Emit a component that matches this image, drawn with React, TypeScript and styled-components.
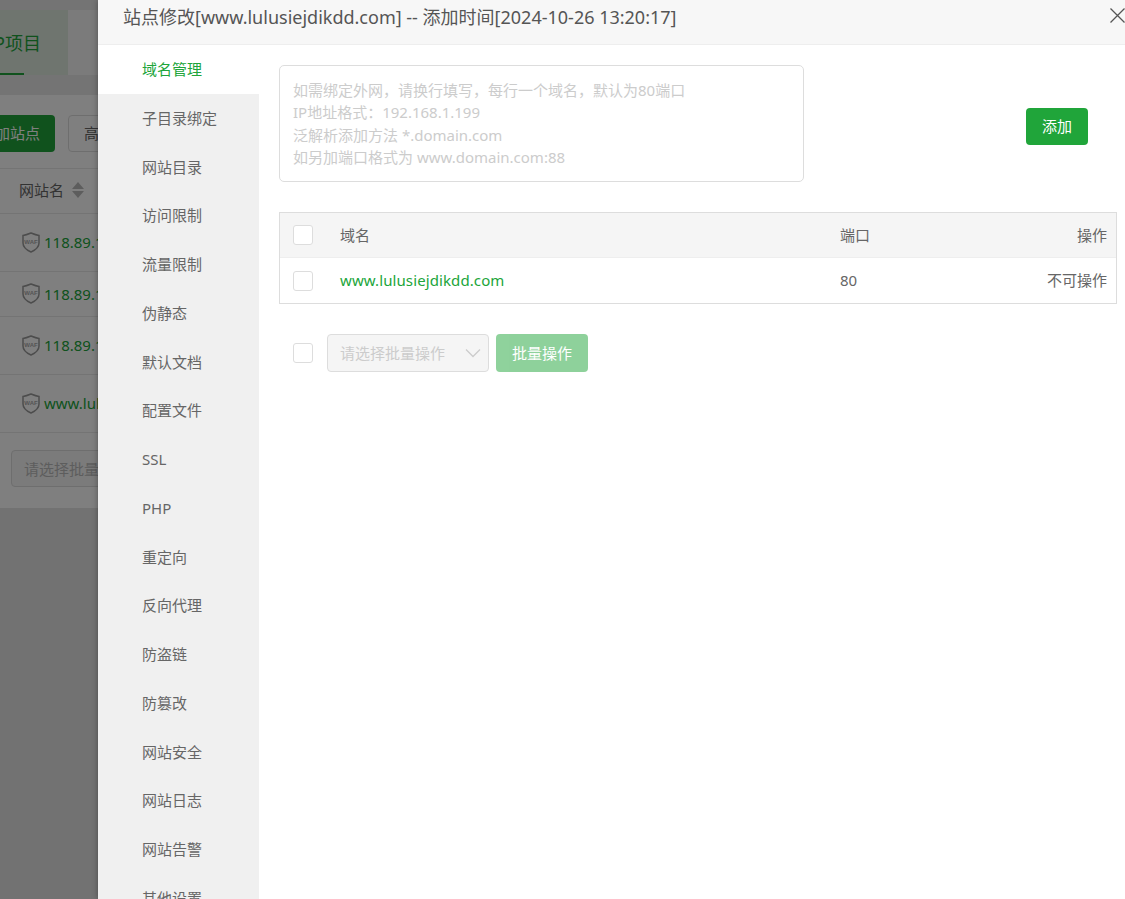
import styled, { createGlobalStyle } from "styled-components";

const FONT = `"Noto Sans", "Noto Sans CJK SC", sans-serif`;
const GREEN = "#20a53a";

const GlobalStyle = createGlobalStyle`
    html, body {
        margin: 0;
        padding: 0;
        overflow: hidden;
    }
    * {
        box-sizing: border-box;
    }
    body {
        font-family: ${FONT};
        font-size: 15px;
        color: #666;
    }
`;

const Page = styled.div`
    position: relative;
    width: 1125px;
    height: 899px;
    overflow: hidden;
    background: #e4e4e4;
`;

const TopTabs = styled.div`
    display: flex;
    height: 95px;
    padding-top: 10px;
    background: #e8e8e8;
`;

const ActiveTab = styled.div`
    width: 68px;
    height: 65px;
    background: #deeade;
    display: flex;
    align-items: center;
    justify-content: flex-end;
    padding: 0 27px 2px 0;
    font-size: 18px;
    color: ${GREEN};
    position: relative;
    white-space: nowrap;

    &::after {
        content: "";
        position: absolute;
        left: 0;
        bottom: 0;
        width: 24px;
        height: 2px;
        background: ${GREEN};
    }
`;

const OtherTab = styled.div`
    width: 300px;
    height: 65px;
    background: #f6f6f6;
`;

const Panel = styled.div`
    background: #fff;
    height: 413px;
`;

const Toolbar = styled.div`
    display: flex;
    gap: 13px;
    height: 74px;
    padding-top: 20px;
    border-bottom: 1px solid #e8e8e8;
`;

const AddSite = styled.div`
    width: 55px;
    height: 37px;
    background: ${GREEN};
    border-radius: 0 4px 4px 0;
    color: #fff;
    display: flex;
    align-items: center;
    justify-content: flex-end;
    padding: 0 15px 2px 0;
    white-space: nowrap;
`;

const Advanced = styled.div`
    width: 120px;
    height: 37px;
    border: 1px solid #ddd;
    border-radius: 4px;
    display: flex;
    align-items: center;
    padding: 0 0 2px 15px;
`;

const SiteRow = styled.div<{ $h: number }>`
    display: flex;
    align-items: center;
    gap: 4px;
    height: ${(p) => p.$h}px;
    padding: 0 0 1px 22px;
    border-bottom: 1px solid #e8e8e8;
    color: ${GREEN};
    font-size: 15px;
    white-space: nowrap;
`;

const HeadRow = styled.div`
    display: flex;
    align-items: center;
    gap: 8px;
    height: 45px;
    padding: 0 0 3px 19px;
    border-bottom: 1px solid #e8e8e8;
    color: #666;
`;

const Sort = styled.span`
    display: flex;
    flex-direction: column;
    gap: 2px;

    &::before, &::after {
        content: "";
        border-left: 6.5px solid transparent;
        border-right: 6.5px solid transparent;
    }
    &::before {
        border-bottom: 7px solid #bbb;
    }
    &::after {
        border-top: 7px solid #bbb;
    }
`;

const PageBulk = styled.div`
    padding: 17px 0 0 11px;
`;

const PageSelect = styled.div`
    width: 200px;
    height: 37px;
    border: 1px solid #ddd;
    border-radius: 4px;
    background: #f6f6f6;
    color: #bbb;
    display: flex;
    align-items: center;
    padding: 0 0 1px 12px;
`;

const Shade = styled.div`
    position: absolute;
    inset: 0;
    background: rgba(0, 0, 0, 0.5);
`;

const Drawer = styled.div`
    position: absolute;
    top: 0;
    left: 98px;
    bottom: 0;
    width: 1039px;
    background: #fff;
    box-shadow: 0 0 6px rgba(0, 0, 0, 0.35);
    display: flex;
    flex-direction: column;
`;

const DrawerHeader = styled.div`
    flex: none;
    height: 45px;
    display: flex;
    justify-content: space-between;
    align-items: flex-start;
    padding: 0 12px 0 25px;
    background: #f7f7f7;
    border-bottom: 1px solid #eee;
`;

const Title = styled.div`
    font-size: 18px;
    line-height: 34px;
    color: #555;
    white-space: nowrap;
`;

const Close = styled.svg`
    width: 15px;
    height: 15px;
    margin-top: 8px;
    stroke: #555;
    stroke-width: 1.3;
    fill: none;
`;

const DrawerBody = styled.div`
    flex: 1;
    min-height: 0;
    display: flex;
`;

const SideNav = styled.ul`
    flex: none;
    width: 161px;
    margin: 0;
    padding: 0;
    list-style: none;
    background: #f0f0f0;
    overflow: hidden;
`;

const NavItem = styled.li<{ $active?: boolean }>`
    height: 48.75px;
    line-height: 48px;
    padding-left: 44px;
    background: ${(p) => (p.$active ? "#fff" : "transparent")};
    color: ${(p) => (p.$active ? GREEN : "#666")};
`;

const Main = styled.div`
    flex: 1;
    padding: 20px 20px 0;
`;

const AddRow = styled.div`
    display: flex;
    align-items: flex-start;
    justify-content: space-between;
    padding-right: 29px;
`;

const DomainInput = styled.div`
    width: 525px;
    height: 117px;
    padding: 13px 13px;
    border: 1px solid #ddd;
    border-radius: 5px;
    line-height: 22.4px;
    color: #ccc;
`;

const GreenButton = styled.button<{ $disabled?: boolean }>`
    height: ${(p) => (p.$disabled ? "38px" : "37px")};
    padding: 0 16px;
    border: none;
    border-radius: 4px;
    background: ${GREEN};
    opacity: ${(p) => (p.$disabled ? 0.5 : 1)};
    color: #fff;
    font-family: inherit;
    font-size: 15px;
    line-height: 1;
`;

const AddButton = styled(GreenButton)`
    margin-top: 43px;
`;

const Table = styled.div`
    margin-top: 30px;
    border: 1px solid #ddd;
`;

const Row = styled.div<{ $head?: boolean }>`
    display: grid;
    grid-template-columns: 47px 500px 1fr auto;
    align-items: center;
    height: 45px;
    padding: 0 9px 0 13px;
    background: ${(p) => (p.$head ? "#f5f5f5" : "#fff")};
    border-bottom: ${(p) => (p.$head ? "1px solid #eee" : "none")};
    color: #666;
`;

const Cell = styled.span<{ $green?: boolean }>`
    margin-bottom: 2px;
    color: ${(p) => (p.$green ? GREEN : "inherit")};
    letter-spacing: ${(p) => (p.$green ? "0.1px" : "0")};
`;

const Check = styled.span`
    display: block;
    width: 20px;
    height: 20px;
    border: 1px solid #ddd;
    border-radius: 3px;
    background: #fff;
`;

const BulkRow = styled.div`
    display: flex;
    align-items: center;
    margin-top: 30px;
    padding-left: 14px;
`;

const BulkSelect = styled.div`
    width: 162px;
    height: 38px;
    margin: 0 7px 0 14px;
    padding: 0 7px 1px 12px;
    display: flex;
    align-items: center;
    justify-content: space-between;
    border: 1px solid #ddd;
    border-radius: 4px;
    background: #f5f5f5;
    color: #ccc;
    white-space: nowrap;
`;

const Chevron = styled.svg`
    width: 16px;
    height: 10px;
    flex: none;
    stroke: #ccc;
    stroke-width: 1.3;
    fill: none;
`;

const navItems = [
    "域名管理", "子目录绑定", "网站目录", "访问限制", "流量限制", "伪静态",
    "默认文档", "配置文件", "SSL", "PHP", "重定向", "反向代理",
    "防盗链", "防篡改", "网站安全", "网站日志", "网站告警", "其他设置",
];

function WafShield() {
    return (
        <svg width="18" height="21" viewBox="0 0 18 21" fill="none">
            <path d="M1 3.5 C4 3 6.5 2 9 1 C11.5 2 14 3 17 3.5 V11 C17 15 13.5 18 9 20 C4.5 18 1 15 1 11 Z" stroke="#9a9a9a" strokeWidth="1.5" />
            <text x="9" y="12" textAnchor="middle" fontSize="6" fontWeight="700" fill="#aaa" fontFamily="Liberation Sans, sans-serif">WAF</text>
        </svg>
    );
}

export default function App() {
    return (
        <Page>
            <GlobalStyle />
            <TopTabs>
                <ActiveTab>P项目</ActiveTab>
                <OtherTab />
            </TopTabs>
            <Panel>
                <Toolbar>
                    <AddSite>加站点</AddSite>
                    <Advanced>高级设置</Advanced>
                </Toolbar>
                <HeadRow>网站名<Sort /></HeadRow>
                <SiteRow $h={58}><WafShield />118.89.123.45</SiteRow>
                <SiteRow $h={45}><WafShield />118.89.123.46</SiteRow>
                <SiteRow $h={58}><WafShield />118.89.123.47</SiteRow>
                <SiteRow $h={58}><WafShield />www.lulusiejdikdd.com</SiteRow>
                <PageBulk><PageSelect>请选择批量操作</PageSelect></PageBulk>
            </Panel>
            <Shade />
            <Drawer>
                <DrawerHeader>
                    <Title>站点修改[www.lulusiejdikdd.com] -- 添加时间[2024-10-26 13:20:17]</Title>
                    <Close viewBox="0 0 15 15"><path d="M0.5 0.5 L14.5 14.5 M14.5 0.5 L0.5 14.5" /></Close>
                </DrawerHeader>
                <DrawerBody>
                    <SideNav>
                        {navItems.map((item, i) => (
                            <NavItem key={item} $active={i === 0}>{item}</NavItem>
                        ))}
                    </SideNav>
                    <Main>
                        <AddRow>
                            <DomainInput>
                                如需绑定外网，请换行填写，每行一个域名，默认为80端口<br />
                                IP地址格式：192.168.1.199<br />
                                泛解析添加方法 *.domain.com<br />
                                如另加端口格式为 www.domain.com:88
                            </DomainInput>
                            <AddButton>添加</AddButton>
                        </AddRow>
                        <Table>
                            <Row $head>
                                <Check />
                                <Cell>域名</Cell>
                                <Cell>端口</Cell>
                                <Cell>操作</Cell>
                            </Row>
                            <Row>
                                <Check />
                                <Cell $green>www.lulusiejdikdd.com</Cell>
                                <Cell>80</Cell>
                                <Cell>不可操作</Cell>
                            </Row>
                        </Table>
                        <BulkRow>
                            <Check />
                            <BulkSelect>
                                请选择批量操作
                                <Chevron viewBox="0 0 16 10"><path d="M1 1.5 L8 8.5 L15 1.5" /></Chevron>
                            </BulkSelect>
                            <GreenButton $disabled>批量操作</GreenButton>
                        </BulkRow>
                    </Main>
                </DrawerBody>
            </Drawer>
        </Page>
    );
}
